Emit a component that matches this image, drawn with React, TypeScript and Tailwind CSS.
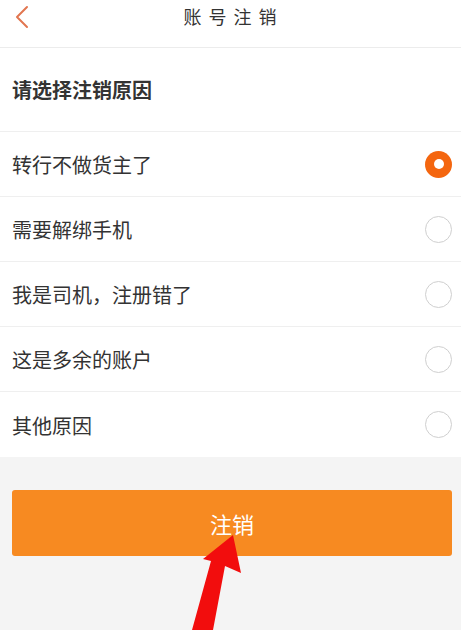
import React, { useState } from 'react';

const reasons = ['转行不做货主了', '需要解绑手机', '我是司机，注册错了', '这是多余的账户', '其他原因'];

const font = { fontFamily: '"Noto Sans CJK SC", "Noto Sans", sans-serif' };

export default function App() {
  const [selected, setSelected] = useState(0);

  return (
    <div className="relative w-[461px] h-[630px] overflow-hidden bg-[#f4f4f4]" style={font}>
      {/* Header */}
      <div className="relative h-[48px] bg-white border-b border-[#ececec] flex items-center justify-center">
        <button className="absolute left-[10px] top-[4px] w-[24px] h-[26px] flex items-center justify-center">
          <svg width="16" height="24" viewBox="0 0 16 24" fill="none">
            <path d="M13 2 L3 12 L13 22" stroke="#e27650" strokeWidth="2" strokeLinecap="round" strokeLinejoin="round" />
          </svg>
        </button>
        <h1 className="text-[18px] text-[#333] tracking-[7px] -mt-[14px] ml-[6px]">账号注销</h1>
      </div>

      {/* Reasons */}
      <div className="bg-white">
        <div className="h-[84px] flex items-center px-[12px] border-b border-[#efefef]">
          <span className="text-[20px] font-bold text-[#333]">请选择注销原因</span>
        </div>
        {reasons.map((r, i) => (
          <div
            key={r}
            onClick={() => setSelected(i)}
            className={`h-[65px] flex items-center justify-between pl-[12px] pr-[9px] ${i < reasons.length - 1 ? 'border-b border-[#efefef]' : ''}`}
          >
            <span className="text-[20px] text-[#333] mt-[2px]">{r}</span>
            {selected === i ? (
              <span className="w-[27px] h-[27px] rounded-full bg-[#f4660f] flex items-center justify-center">
                <span className="w-[10px] h-[10px] rounded-full bg-white" />
              </span>
            ) : (
              <span className="w-[27px] h-[27px] rounded-full border-[1.5px] border-[#cfcfcf] bg-white" />
            )}
          </div>
        ))}
      </div>

      {/* Button */}
      <div className="pl-[12px] pr-[9px] pt-[33px]">
        <button className="w-full h-[66px] rounded-[3px] bg-[#f78a21] text-white text-[22px]">注销</button>
      </div>

      {/* Red arrow annotation */}
      <svg className="absolute left-0 top-0 pointer-events-none" width="461" height="630" viewBox="0 0 461 630">
        <polygon points="233,535 241,573 225,566 213,630 192,630 211,561 203,559" fill="#f20d0d" />
      </svg>
    </div>
  );
}
